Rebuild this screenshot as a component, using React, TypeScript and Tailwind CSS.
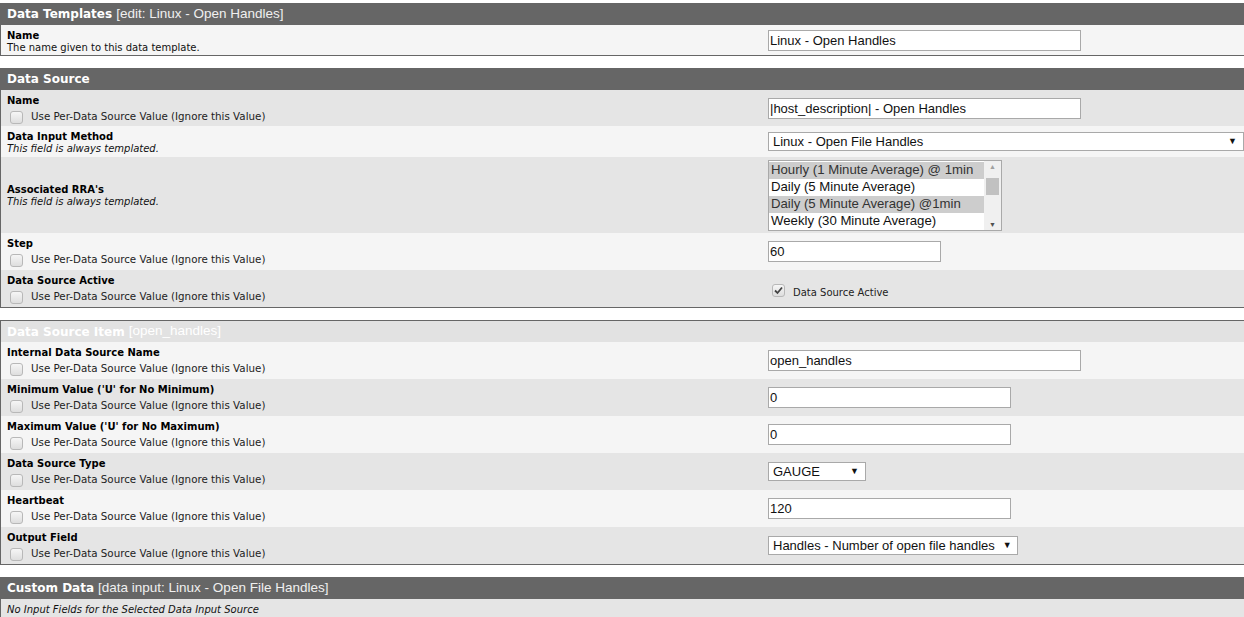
import React from "react";

const verdana = "font-['DejaVu_Sans',Verdana,sans-serif]";
const arial = "font-['Liberation_Sans',Arial,sans-serif]";

const Checkbox = ({ checked = false }: { checked?: boolean }) => (
  <span className="inline-flex items-center justify-center w-[13px] h-[13px] rounded-[3px] border border-[#b8b8b8] bg-gradient-to-b from-[#f6f6f6] to-[#dedede] shrink-0">
    {checked && (
      <svg width="9" height="9" viewBox="0 0 9 9">
        <path d="M1 4.5 L3.5 7 L8 1.5" stroke="#444" strokeWidth="1.8" fill="none" />
      </svg>
    )}
  </span>
);

const PerSource = () => (
  <div className="flex items-center gap-[8px] pl-[3px] h-[18px] mt-[1px]">
    <Checkbox />
    <span className={`${verdana} text-[10.3px] text-[#222] whitespace-nowrap`}>Use Per-Data Source Value (Ignore this Value)</span>
  </div>
);

const TextBox = ({ value, width }: { value: string; width: string }) => (
  <div className={`${width} h-[21px] border border-[#a9a9a9] bg-white flex items-center pl-[1px] ${arial} text-[13px] text-[#111] leading-none whitespace-nowrap`}>
    {value}
  </div>
);

const Select = ({ value, width }: { value: string; width: string }) => (
  <div className={`${width} h-[19px] border border-[#a9a9a9] bg-white flex items-center justify-between pl-[4px] pr-[6px] ${arial} text-[13px] text-[#111] leading-none whitespace-nowrap`}>
    <span>{value}</span>
    <span className="text-[9px] ml-2">▼</span>
  </div>
);

type RowProps = {
  bg: string;
  h: string;
  label: string;
  desc?: string;
  italic?: boolean;
  perSource?: boolean;
  children?: React.ReactNode;
};

const Row = ({ bg, h, label, desc, italic, perSource, children }: RowProps) => (
  <div className={`grid grid-cols-[762px_1fr] ${bg} ${h}`}>
    <div className="pl-[6px] pt-[4px] flex flex-col justify-start">
      <div className={`${verdana} text-[10px] font-bold text-black leading-[13px]`}>{label}</div>
      {desc && (
        <div className={`${verdana} text-[10px] text-[#111] leading-[12px] ${italic ? "italic" : ""}`}>{desc}</div>
      )}
      {perSource && <PerSource />}
    </div>
    <div className="flex items-center pl-[5px]">{children}</div>
  </div>
);

const Header = ({ title, sub, light }: { title: string; sub: string; light?: boolean }) => (
  <div
    className={`h-[22px] flex items-center pl-[6px] ${light ? "bg-[#e2e2e2] border-t border-[#666]" : "bg-[#666666]"} text-white`}
  >
    <span className={`${verdana} text-[12px] font-bold`}>{title}</span>
    <span className={`${arial} text-[13.5px] ml-[4px] ${light ? "text-white" : "text-[#f0f0f0]"}`}>{sub}</span>
  </div>
);

const Panel = ({ children, className = "" }: { children: React.ReactNode; className?: string }) => (
  <div className={`border-l border-b border-[#666] ${className}`}>{children}</div>
);

const rras = [
  { t: "Hourly (1 Minute Average) @ 1min", sel: true },
  { t: "Daily (5 Minute Average)", sel: false },
  { t: "Daily (5 Minute Average) @1min", sel: true },
  { t: "Weekly (30 Minute Average)", sel: false },
];

const ListBox = () => (
  <div className="w-[234px] h-[71px] border border-[#a9a9a9] bg-white flex">
    <div className="flex-1 pt-[1px]">
      {rras.map((r) => (
        <div
          key={r.t}
          className={`h-[17px] pl-[2px] flex items-center ${arial} text-[13.2px] leading-none whitespace-nowrap ${r.sel ? "bg-[#cdcdcd] text-[#333]" : "text-[#111]"}`}
        >
          {r.t}
        </div>
      ))}
    </div>
    <div className="w-[17px] bg-[#f0f0f0] flex flex-col items-center justify-between py-[2px]">
      <span className="text-[7px] text-[#a0a0a0] leading-none">▲</span>
      <div className="w-[13px] h-[17px] bg-[#c1c1c1] -mt-[18px]" />
      <span className="text-[7px] text-[#505050] leading-none">▼</span>
    </div>
  </div>
);

export default function App() {
  return (
    <div className="w-[1244px] h-[617px] overflow-hidden bg-white pt-[3px]">
      <Panel>
        <Header title="Data Templates" sub="[edit: Linux - Open Handles]" />
        <Row bg="bg-[#f5f5f5]" h="h-[30px]" label="Name" desc="The name given to this data template.">
          <TextBox value="Linux - Open Handles" width="w-[313px]" />
        </Row>
      </Panel>

      <Panel className="mt-[12px]">
        <Header title="Data Source" sub="" />
        <Row bg="bg-[#e5e5e5]" h="h-[36px]" label="Name" perSource>
          <TextBox value="|host_description| - Open Handles" width="w-[313px]" />
        </Row>
        <Row bg="bg-[#f5f5f5]" h="h-[31px]" label="Data Input Method" desc="This field is always templated." italic>
          <Select value="Linux - Open File Handles" width="w-full" />
        </Row>
        <div className="grid grid-cols-[762px_1fr] bg-[#e5e5e5] h-[76px]">
          <div className="pl-[6px] flex flex-col justify-center">
            <div className={`${verdana} text-[10px] font-bold text-black leading-[13px]`}>Associated RRA's</div>
            <div className={`${verdana} text-[10px] italic text-[#111] leading-[12px]`}>This field is always templated.</div>
          </div>
          <div className="flex items-center pl-[5px]">
            <ListBox />
          </div>
        </div>
        <Row bg="bg-[#f5f5f5]" h="h-[37px]" label="Step" perSource>
          <TextBox value="60" width="w-[173px]" />
        </Row>
        <Row bg="bg-[#e5e5e5]" h="h-[37px]" label="Data Source Active" perSource>
          <div className="flex items-center gap-[8px] pl-[4px] pt-[4px]">
            <Checkbox checked />
            <span className={`${verdana} text-[10px] text-[#222] mt-[4px]`}>Data Source Active</span>
          </div>
        </Row>
      </Panel>

      <Panel className="mt-[12px]">
        <Header title="Data Source Item" sub="[open_handles]" light />
        <Row bg="bg-[#f5f5f5]" h="h-[37px]" label="Internal Data Source Name" perSource>
          <TextBox value="open_handles" width="w-[313px]" />
        </Row>
        <Row bg="bg-[#e5e5e5]" h="h-[37px]" label="Minimum Value ('U' for No Minimum)" perSource>
          <TextBox value="0" width="w-[243px]" />
        </Row>
        <Row bg="bg-[#f5f5f5]" h="h-[37px]" label="Maximum Value ('U' for No Maximum)" perSource>
          <TextBox value="0" width="w-[243px]" />
        </Row>
        <Row bg="bg-[#e5e5e5]" h="h-[37px]" label="Data Source Type" perSource>
          <Select value="GAUGE" width="w-[98px]" />
        </Row>
        <Row bg="bg-[#f5f5f5]" h="h-[37px]" label="Heartbeat" perSource>
          <TextBox value="120" width="w-[243px]" />
        </Row>
        <Row bg="bg-[#e5e5e5]" h="h-[37px]" label="Output Field" perSource>
          <Select value="Handles - Number of open file handles" width="w-[250px]" />
        </Row>
      </Panel>

      <Panel className="mt-[12px]">
        <Header title="Custom Data" sub="[data input: Linux - Open File Handles]" />
        <div className="bg-[#e5e5e5] h-[20px] pl-[6px] flex items-center">
          <span className={`${verdana} text-[10px] italic text-[#111]`}>No Input Fields for the Selected Data Input Source</span>
        </div>
      </Panel>
    </div>
  );
}
